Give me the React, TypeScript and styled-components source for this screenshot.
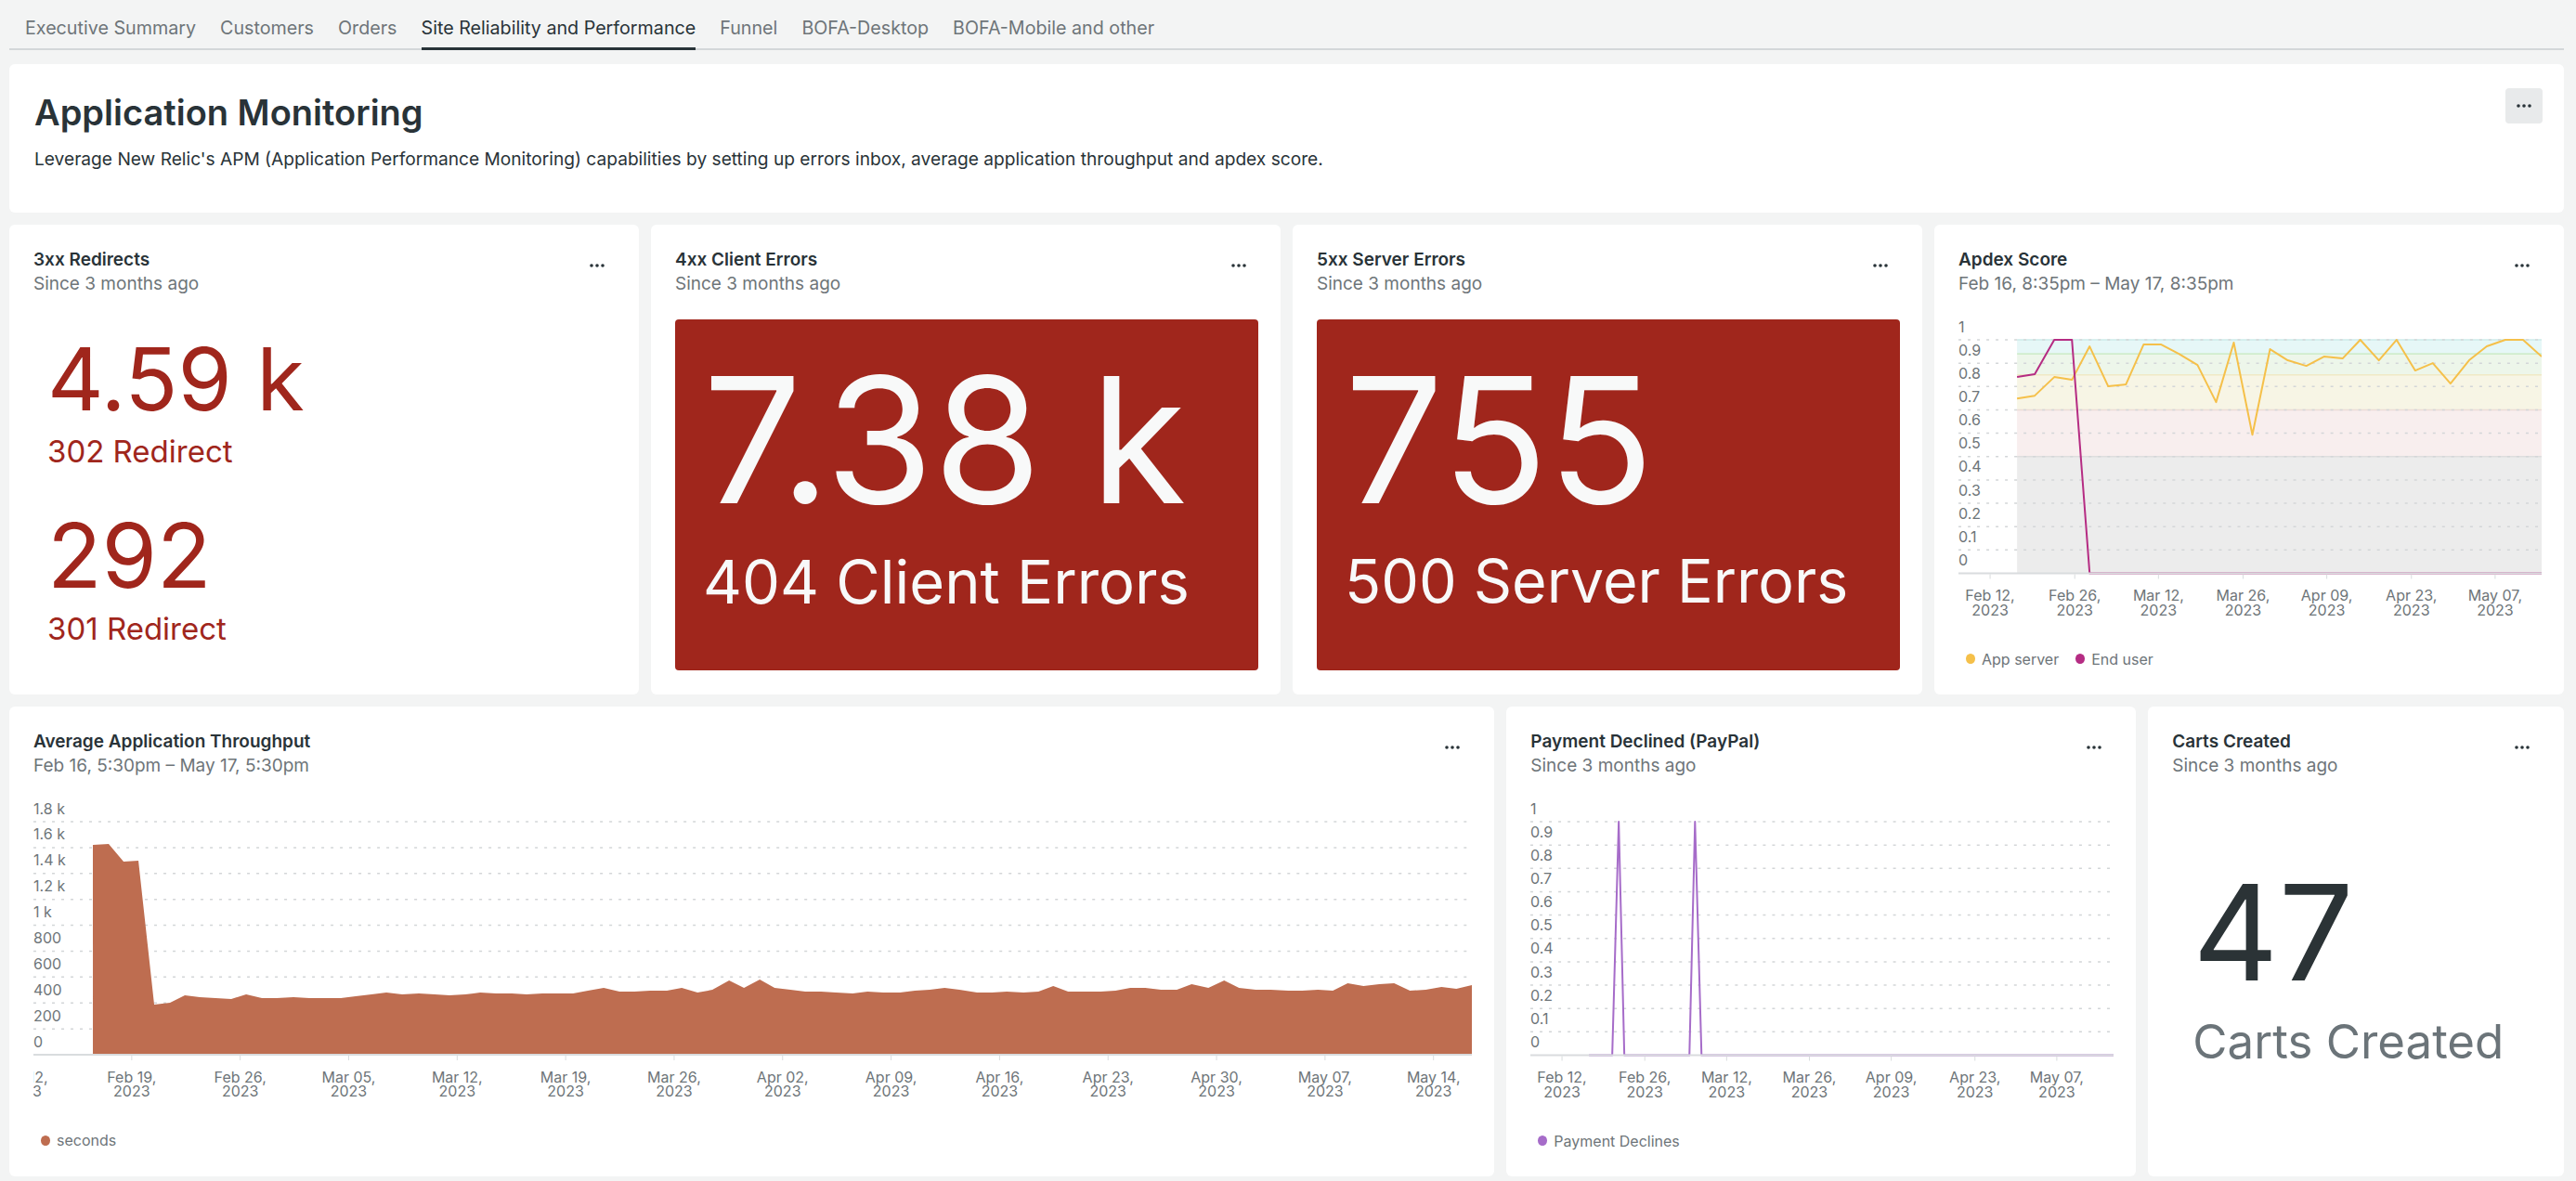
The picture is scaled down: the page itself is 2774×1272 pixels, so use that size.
import React from "react";
import styled, { createGlobalStyle } from "styled-components";

const GlobalStyle = createGlobalStyle`
  html, body { margin: 0; padding: 0; background: #f3f4f4; }
  body {
    font-family: Inter, "Open Sans", "Liberation Sans", sans-serif;
    color: #293338;
    -webkit-font-smoothing: antialiased;
  }
  * { box-sizing: border-box; }
`;

const RED = "#a0261c";
const DARK = "#293338";
const MUTED = "#6e7579";

const Page = styled.div`
  padding: 0 13px 5px 10px;
`;

const TabBar = styled.nav`
  display: flex;
  gap: 26px;
  padding-left: 17px;
  border-bottom: 2px solid #d3d7d9;
`;

const Tab = styled.div<{ $active?: boolean }>`
  font-size: 19.7px;
  line-height: 22px;
  padding: 19px 0 10px;
  margin-bottom: -2px;
  white-space: nowrap;
  border-bottom: 3px solid ${(p) => (p.$active ? DARK : "transparent")};
  color: ${(p) => (p.$active ? DARK : MUTED)};
`;

const Grid = styled.main`
  display: grid;
  grid-template-columns: repeat(12, minmax(0, 1fr));
  grid-template-rows: 160px 506px 506px;
  gap: 13px;
  margin-top: 15px;
`;

const Card = styled.section<{ $span: number }>`
  grid-column: span ${(p) => p.$span};
  background: #ffffff;
  border-radius: 6px;
  min-width: 0;
  overflow: hidden;
`;

const IntroCard = styled(Card)`
  display: flex;
  justify-content: space-between;
  align-items: flex-start;
  padding: 29px 23px 0 27px;
`;

const PageTitle = styled.h1`
  margin: 0;
  font-size: 38px;
  line-height: 46px;
  font-weight: 600;
  color: ${DARK};
`;

const Description = styled.p`
  margin: 14px 0 0;
  font-size: 19.15px;
  line-height: 26px;
  color: ${DARK};
`;

const MoreButton = styled.button`
  width: 40px;
  height: 38px;
  margin-top: -3px;
  padding: 0;
  border: 0;
  border-radius: 4px;
  background: #e8eaeb;
  color: ${DARK};
  display: flex;
  align-items: center;
  justify-content: center;
`;

const Widget = styled(Card)`
  display: flex;
  flex-direction: column;
  padding: 25px 24px 26px 26px;
`;

const WidgetHeader = styled.header`
  display: flex;
  justify-content: space-between;
  align-items: flex-start;
`;

const WidgetTitle = styled.h2`
  margin: 0;
  font-size: 19px;
  line-height: 26px;
  font-weight: 600;
  color: ${DARK};
`;

const WidgetSubtitle = styled.div`
  font-size: 19px;
  line-height: 26px;
  color: ${MUTED};
`;

const MenuDots = styled.button`
  width: 24px;
  height: 24px;
  margin: 7px 9px 0 0;
  padding: 0;
  border: 0;
  background: transparent;
  color: ${DARK};
  display: flex;
  align-items: center;
  justify-content: center;
`;

const StatStack = styled.div`
  display: flex;
  flex-direction: column;
  padding-left: 15px;
  margin-top: 42px;
`;

const StatValue = styled.div<{ $size: number; $color: string; $gap?: number }>`
  font-size: ${(p) => p.$size}px;
  line-height: 1;
  color: ${(p) => p.$color};
  margin-top: ${(p) => p.$gap ?? 0}px;
  white-space: nowrap;
`;

const AlertPanel = styled.div`
  flex: 1;
  margin-top: 25px;
  padding: 36px 30px 0;
  border-radius: 4px;
  background: ${RED};
  color: #f8f9f9;
  overflow: hidden;
`;

const CenteredStat = styled.div`
  flex: 1;
  display: flex;
  flex-direction: column;
  justify-content: center;
  padding-left: 22px;
`;

const ChartSvg = styled.svg`
  display: block;
  width: 100%;
  height: auto;
  margin-top: 20px;
  overflow: hidden;
  font-family: Inter, "Open Sans", "Liberation Sans", sans-serif;
`;

const Legend = styled.div`
  display: flex;
  gap: 18px;
  margin-top: 30px;
  padding-left: 8px;
  font-size: 16px;
  line-height: 20px;
  color: ${MUTED};
`;

const LegendItem = styled.span`
  display: inline-flex;
  align-items: center;
  gap: 7px;
`;

const LegendDot = styled.span<{ $color: string }>`
  width: 10px;
  height: 11px;
  border-radius: 50%;
  background: ${(p) => p.$color};
`;

const Dots = () => (
  <svg width="16" height="4" viewBox="0 0 16 4" aria-hidden>
    <circle cx="2" cy="2" r="1.8" fill="currentColor" />
    <circle cx="8" cy="2" r="1.8" fill="currentColor" />
    <circle cx="14" cy="2" r="1.8" fill="currentColor" />
  </svg>
);

type XTick = { x: number; l1: string; l2: string };

const TOP = 27;
const AXIS = 278;

function ChartFrame({
  width,
  yLabels,
  xTicks,
  background,
  children,
}: {
  width: number;
  yLabels: string[];
  xTicks: XTick[];
  background?: React.ReactNode;
  children?: React.ReactNode;
}) {
  const step = (AXIS - TOP) / (yLabels.length - 1);
  return (
    <ChartSvg viewBox={`0 0 ${width} 330`}>
      {background}
      {yLabels.map((_, i) =>
        i < yLabels.length - 1 ? (
          <line
            key={"g" + i}
            x1={0}
            x2={width}
            y1={TOP + i * step}
            y2={TOP + i * step}
            stroke="#d3d6d8"
            strokeWidth={1.5}
            strokeDasharray="3 7"
          />
        ) : null
      )}
      {children}
      <line x1={0} x2={width} y1={AXIS} y2={AXIS} stroke="#d9dcde" strokeWidth={2} />
      {yLabels.map((l, i) => (
        <text key={"y" + i} x={0} y={TOP + i * step - 8.5} fontSize={16} fill={MUTED}>
          {l}
        </text>
      ))}
      {xTicks.map((t, i) => (
        <g key={"x" + i}>
          <line x1={t.x} x2={t.x} y1={AXIS + 1} y2={AXIS + 6} stroke="#d9dcde" strokeWidth={1} />
          <text x={t.x} y={308} fontSize={16} fill={MUTED} textAnchor="middle">
            {t.l1}
          </text>
          <text x={t.x} y={323} fontSize={16} fill={MUTED} textAnchor="middle">
            {t.l2}
          </text>
        </g>
      ))}
    </ChartSvg>
  );
}

const toPath = (pts: number[][]) => pts.map((p, i) => (i ? "L" : "M") + p[0] + " " + p[1]).join(" ");

const apdexLabels = ["1", "0.9", "0.8", "0.7", "0.6", "0.5", "0.4", "0.3", "0.2", "0.1", "0"];

const apdexTicks: XTick[] = [
  ["Feb 12,", 34],
  ["Feb 26,", 125],
  ["Mar 12,", 215],
  ["Mar 26,", 306],
  ["Apr 09,", 396],
  ["Apr 23,", 487],
  ["May 07,", 577],
].map(([l, x]) => ({ x: x as number, l1: l as string, l2: "2023" }));

const paymentTicks: XTick[] = [
  ["Feb 12,", 34],
  ["Feb 26,", 123],
  ["Mar 12,", 211],
  ["Mar 26,", 300],
  ["Apr 09,", 388],
  ["Apr 23,", 478],
  ["May 07,", 566],
].map(([l, x]) => ({ x: x as number, l1: l as string, l2: "2023" }));

const throughputTicks: XTick[] = [
  "Feb 12,",
  "Feb 19,",
  "Feb 26,",
  "Mar 05,",
  "Mar 12,",
  "Mar 19,",
  "Mar 26,",
  "Apr 02,",
  "Apr 09,",
  "Apr 16,",
  "Apr 23,",
  "Apr 30,",
  "May 07,",
  "May 14,",
].map((l, i) => ({ x: -11 + i * 116.8, l1: l, l2: "2023" }));

const appServer = [
  [63, 90], [82, 87], [103, 67], [122, 70], [141, 34], [161, 77], [180, 75], [199, 32],
  [218, 32], [237, 42], [257, 54], [277, 94], [296, 30], [316, 129], [335, 37], [354, 49],
  [374, 55], [393, 45], [413, 47], [432, 27], [452, 49], [471, 27], [491, 60], [510, 52],
  [529, 74], [549, 49], [568, 34], [588, 27], [607, 27], [627, 45],
];

const endUser = [
  [63, 67], [82, 64], [103, 27], [122, 27], [141, 278], [627, 278],
];

const payment = [
  [63, 278], [88, 278], [95, 27], [101, 278], [171, 278], [177, 27], [184, 278], [627, 278],
];

const throughput = [
  [64, 52], [81, 51], [97, 70], [113, 69], [130, 224], [147, 222], [163, 214], [179, 216],
  [196, 217], [213, 218], [229, 213], [246, 217], [262, 217], [280, 216], [297, 217], [314, 217],
  [331, 217], [347, 215], [364, 213], [380, 211], [397, 213], [415, 212], [432, 213], [448, 214],
  [465, 213], [481, 211], [498, 212], [515, 212], [531, 213], [548, 212], [564, 212], [581, 212],
  [597, 209], [614, 206], [631, 210], [647, 210], [664, 209], [682, 209], [698, 206], [715, 211],
  [731, 208], [749, 198], [765, 206], [782, 197], [798, 206], [815, 208], [831, 210], [848, 210],
  [864, 211], [882, 212], [898, 210], [915, 211], [933, 211], [949, 209], [965, 208], [981, 206],
  [997, 208], [1016, 211], [1032, 211], [1048, 210], [1066, 211], [1082, 210], [1098, 204], [1114, 210],
  [1130, 210], [1149, 210], [1165, 209], [1181, 206], [1197, 206], [1214, 208], [1231, 208], [1247, 202],
  [1265, 206], [1282, 198], [1298, 206], [1316, 208], [1332, 208], [1351, 209], [1366, 209], [1383, 208],
  [1399, 209], [1415, 201], [1432, 204], [1449, 202], [1465, 201], [1482, 209], [1499, 208], [1516, 205],
  [1532, 207], [1549, 203],
];

const bandY = (v: number) => TOP + (1 - v) * (AXIS - TOP);

const ApdexBands = () => {
  const bands = [
    { from: 1, to: 0.94, fill: "#e6f7f7", edge: "#cdebea" },
    { from: 0.94, to: 0.85, fill: "#edf6ea", edge: "#cfeccc" },
    { from: 0.85, to: 0.7, fill: "#f7f5e5", edge: "#efe9c6" },
    { from: 0.7, to: 0.5, fill: "#f8eeee", edge: "#ecdcd6" },
    { from: 0.5, to: 0, fill: "#ececec", edge: "#dedede" },
  ];
  return (
    <g>
      {bands.map((b, i) => (
        <g key={i}>
          <rect x={63} width={564} y={bandY(b.from)} height={bandY(b.to) - bandY(b.from)} fill={b.fill} />
          <line x1={63} x2={627} y1={bandY(b.from)} y2={bandY(b.from)} stroke={b.edge} strokeWidth={1.5} />
        </g>
      ))}
    </g>
  );
};

const tabs = [
  "Executive Summary",
  "Customers",
  "Orders",
  "Site Reliability and Performance",
  "Funnel",
  "BOFA-Desktop",
  "BOFA-Mobile and other",
];

function WidgetHead({ title, subtitle }: { title: string; subtitle: string }) {
  return (
    <WidgetHeader>
      <div>
        <WidgetTitle>{title}</WidgetTitle>
        <WidgetSubtitle>{subtitle}</WidgetSubtitle>
      </div>
      <MenuDots aria-label="More">
        <Dots />
      </MenuDots>
    </WidgetHeader>
  );
}

export default function App() {
  return (
    <>
      <GlobalStyle />
      <Page>
        <TabBar>
          {tabs.map((t) => (
            <Tab key={t} $active={t === "Site Reliability and Performance"}>
              {t}
            </Tab>
          ))}
        </TabBar>
        <Grid>
          <IntroCard $span={12}>
            <div>
              <PageTitle>Application Monitoring</PageTitle>
              <Description>
                Leverage New Relic's APM (Application Performance Monitoring) capabilities by setting up errors inbox,
                average application throughput and apdex score.
              </Description>
            </div>
            <MoreButton aria-label="More">
              <Dots />
            </MoreButton>
          </IntroCard>

          <Widget $span={3}>
            <WidgetHead title="3xx Redirects" subtitle="Since 3 months ago" />
            <StatStack>
              <StatValue $size={94} $color={RED}>4.59 k</StatValue>
              <StatValue $size={33} $color={RED} $gap={15}>302 Redirect</StatValue>
              <StatValue $size={96} $color={RED} $gap={47}>292</StatValue>
              <StatValue $size={33} $color={RED} $gap={15}>301 Redirect</StatValue>
            </StatStack>
          </Widget>

          <Widget $span={3}>
            <WidgetHead title="4xx Client Errors" subtitle="Since 3 months ago" />
            <AlertPanel>
              <StatValue $size={188} $color="#f8f9f9">7.38 k</StatValue>
              <StatValue $size={65} $color="#f8f9f9" $gap={26}>404 Client Errors</StatValue>
            </AlertPanel>
          </Widget>

          <Widget $span={3}>
            <WidgetHead title="5xx Server Errors" subtitle="Since 3 months ago" />
            <AlertPanel>
              <StatValue $size={188} $color="#f8f9f9">755</StatValue>
              <StatValue $size={64.5} $color="#f8f9f9" $gap={26}>500 Server Errors</StatValue>
            </AlertPanel>
          </Widget>

          <Widget $span={3}>
            <WidgetHead title="Apdex Score" subtitle="Feb 16, 8:35pm – May 17, 8:35pm" />
            <ChartFrame width={627} yLabels={apdexLabels} xTicks={apdexTicks} background={<ApdexBands />}>
              <path d={toPath(appServer)} fill="none" stroke="#f5c04a" strokeWidth={2} strokeLinejoin="round" />
              <path d={toPath(endUser)} fill="none" stroke="#b52c83" strokeWidth={2} strokeLinejoin="round" />
            </ChartFrame>
            <Legend>
              <LegendItem>
                <LegendDot $color="#f5c04a" />
                App server
              </LegendItem>
              <LegendItem>
                <LegendDot $color="#b52c83" />
                End user
              </LegendItem>
            </Legend>
          </Widget>

          <Widget $span={7}>
            <WidgetHead title="Average Application Throughput" subtitle="Feb 16, 5:30pm – May 17, 5:30pm" />
            <ChartFrame
              width={1549}
              yLabels={["1.8 k", "1.6 k", "1.4 k", "1.2 k", "1 k", "800", "600", "400", "200", "0"]}
              xTicks={throughputTicks}
            >
              <path d={toPath([[64, AXIS], ...throughput, [1549, AXIS]]) + " Z"} fill="#be6d50" />
            </ChartFrame>
            <Legend>
              <LegendItem>
                <LegendDot $color="#be6d50" />
                seconds
              </LegendItem>
            </Legend>
          </Widget>

          <Widget $span={3}>
            <WidgetHead title="Payment Declined (PayPal)" subtitle="Since 3 months ago" />
            <ChartFrame width={627} yLabels={apdexLabels} xTicks={paymentTicks}>
              <path d={toPath(payment)} fill="none" stroke="#a66cc9" strokeWidth={2} strokeLinejoin="round" />
            </ChartFrame>
            <Legend>
              <LegendItem>
                <LegendDot $color="#a66cc9" />
                Payment Declines
              </LegendItem>
            </Legend>
          </Widget>

          <Widget $span={2}>
            <WidgetHead title="Carts Created" subtitle="Since 3 months ago" />
            <CenteredStat>
              <StatValue $size={143} $color="#2b3336">47</StatValue>
              <StatValue $size={51} $color="#6b7479" $gap={21}>Carts Created</StatValue>
            </CenteredStat>
          </Widget>
        </Grid>
      </Page>
    </>
  );
}
